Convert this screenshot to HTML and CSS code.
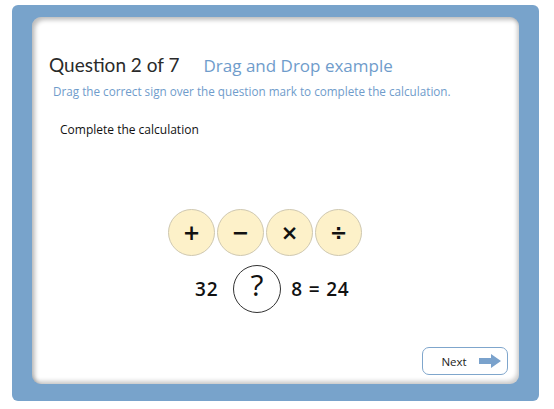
FILE: index.html
```html
<!DOCTYPE html>
<html lang="en">
<head>
  <meta charset="UTF-8">
  <meta name="viewport" content="width=device-width, initial-scale=1.0">
  <title>Question 2 of 7</title>
  <link rel="stylesheet" href="styles.css">
</head>
<body>
  <div class="frame">
    <div class="card">
      <div class="head">
        <span class="qnum">Question 2 of 7</span>
        <span class="qtitle">Drag and Drop example</span>
      </div>
      <div class="hint">Drag the correct sign over the question mark to complete the calculation.</div>
      <div class="task">Complete the calculation</div>
      <div class="signs">
        <div class="sign">+</div>
        <div class="sign">&minus;</div>
        <div class="sign">&times;</div>
        <div class="sign">&divide;</div>
      </div>
      <div class="sum">
        <span>32</span>
        <div class="drop">?</div>
        <span>8 = 24</span>
      </div>
      <div class="foot">
        <button class="next">Next
          <svg width="22" height="14" viewBox="0 0 22 14"><path d="M0 4h12V0l10 7-10 7v-4H0z" fill="#7aa2cc"/></svg>
        </button>
      </div>
    </div>
  </div>
</body>
</html>
```

FILE: styles.css
```css
body{
  margin: 0;
  font-family: "Open Sans", "DejaVu Sans", sans-serif;
  background: #fff;
}
.frame{
  margin: 5px 0 0 12px;
  width: 527px;
  height: 396px;
  box-sizing: border-box;
  padding: 12px 20px 17px 20px;
  background: #78a3cb;
  border-radius: 6px;
}
.card{
  height: 100%;
  background: #fff;
  border-radius: 9px;
  box-shadow: inset 3px 3px 4px rgba(0,0,0,.25), inset -2px -3px 4px rgba(0,0,0,.2);
  display: flex;
  flex-direction: column;
  padding: 36px 0 0 17px;
  box-sizing: border-box;
}
.head{
  display: flex;
  align-items: baseline;
  gap: 24px;
}
.qnum{
  font-family: Lato, "Open Sans", sans-serif;
  font-size: 19px;
  color: #2a2a2a;
}
.qtitle{
  font-size: 17px;
  color: #6f9ccb;
}
.hint{
  font-size: 11.7px;
  color: #6f9ccb;
  margin: 6px 0 0 4px;
}
.task{
  font-size: 12px;
  color: #111;
  margin: 22px 0 0 11px;
}
.signs{
  display: flex;
  gap: 2px;
  margin: 71px 0 0 119px;
}
.sign{
  width: 45px;
  height: 45px;
  border-radius: 50%;
  border: 1px solid #cfc8b0;
  background: #fdf1c9;
  display: flex;
  align-items: center;
  justify-content: center;
  font-family: "DejaVu Sans", sans-serif;
  font-size: 21px;
  font-weight: 700;
  color: #111;
}
.sum{
  display: flex;
  align-items: center;
  margin: 9px 0 0 146px;
  font-size: 19px;
  letter-spacing: 0.8px;
  font-weight: 600;
  color: #111;
}
.drop{
  width: 48px;
  height: 48px;
  border-radius: 50%;
  border: 1px solid #333;
  margin: 0 10px 0 15px;
  display: flex;
  align-items: center;
  justify-content: center;
  font-size: 30px;
  font-weight: 400;
  line-height: 1;
  padding-bottom: 8px;
  box-sizing: border-box;
}
.foot{
  display: flex;
  justify-content: flex-end;
  margin: auto 11px 9px 0;
}
.next{
  width: 86px;
  height: 28px;
  border: 1.5px solid #7fa6cc;
  border-radius: 7px;
  background: #fff;
  font-family: inherit;
  font-size: 11.5px;
  color: #222;
  display: flex;
  align-items: center;
  justify-content: center;
  gap: 12px;
  padding: 0 0 0 12px;
}
```
